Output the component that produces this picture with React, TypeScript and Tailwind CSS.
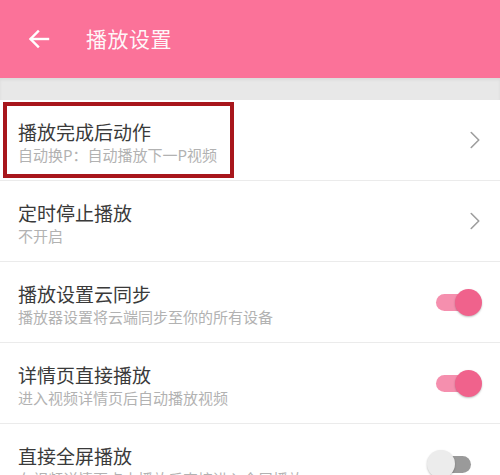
import { ChevronRight } from "lucide-react";

interface Row {
  title: string;
  desc: string;
  kind: "link" | "on" | "off";
}

const rows: Row[] = [
  { title: "播放完成后动作", desc: "自动换P：自动播放下一P视频", kind: "link" },
  { title: "定时停止播放", desc: "不开启", kind: "link" },
  { title: "播放设置云同步", desc: "播放器设置将云端同步至你的所有设备", kind: "on" },
  { title: "详情页直接播放", desc: "进入视频详情页后自动播放视频", kind: "on" },
  { title: "直接全屏播放", desc: "在视频详情页点击播放后直接进入全屏播放", kind: "off" },
];

function Toggle({ on }: { on: boolean }) {
  if (on) {
    return (
      <div className="relative w-[46px] h-[28px] flex items-center">
        <div className="absolute left-0 right-[8px] h-[17px] rounded-full bg-[#f58fae]" />
        <div className="absolute right-0 w-[27px] h-[27px] rounded-full bg-[#f0628c] shadow-[0_1px_2px_rgba(0,0,0,0.25)]" />
      </div>
    );
  }
  return (
    <div className="relative w-[44px] h-[28px] flex items-center">
      <div className="absolute left-[8px] right-0 h-[17px] rounded-full bg-[#9a9a9a]" />
      <div className="absolute left-0 w-[28px] h-[28px] rounded-full bg-[#ececec] shadow-[0_1px_2px_rgba(0,0,0,0.25)]" />
    </div>
  );
}

export default function App() {
  return (
    <div
      className="relative w-[500px] h-[475px] overflow-hidden bg-white"
      style={{ fontFamily: '"Noto Sans CJK SC", "Noto Sans", sans-serif' }}
    >
      {/* Header */}
      <div className="h-[78px] bg-[#fb7299] flex items-center">
        <svg width="24" height="24" viewBox="0 0 24 24" className="ml-[27px]" fill="none" stroke="#fff" strokeWidth="2.4" strokeLinecap="square">
          <path d="M21 12H4" />
          <path d="M11 4.5L3.5 12L11 19.5" strokeLinecap="square" />
        </svg>
        <span className="ml-[35px] text-[21px] text-white/95 tracking-[0.5px]">播放设置</span>
      </div>
      <div className="h-[22px] bg-[#e8e8e8] shadow-[inset_0_2px_3px_rgba(0,0,0,0.06)]" />

      {/* Settings list */}
      <div>
        {rows.map((row) => (
          <div key={row.title} className="h-[81px] flex">
            <div className="flex-1 flex items-start pl-[18px] border-b border-[#ebebeb]">
              <div className="flex-1 pt-[20px]">
                <div className="text-[19px] leading-[24px] text-[#3a3a3a]">{row.title}</div>
                <div className="text-[15px] leading-[20px] mt-[1px] text-[#b2b2b2] whitespace-nowrap">{row.desc}</div>
              </div>
              <div className="h-[80px] flex items-center pr-[18px]">
                {row.kind === "link" && <ChevronRight size={30} strokeWidth={1.3} className="text-[#9e9e9e] -mr-[8px]" />}
                {row.kind === "on" && <Toggle on />}
                {row.kind === "off" && <div className="pr-[11px]"><Toggle on={false} /></div>}
              </div>
            </div>
          </div>
        ))}
      </div>

      {/* Annotation box */}
      <div className="absolute left-[3px] top-[102px] w-[231px] h-[76px] border-[4px] border-[#a8161c]" />
    </div>
  );
}
